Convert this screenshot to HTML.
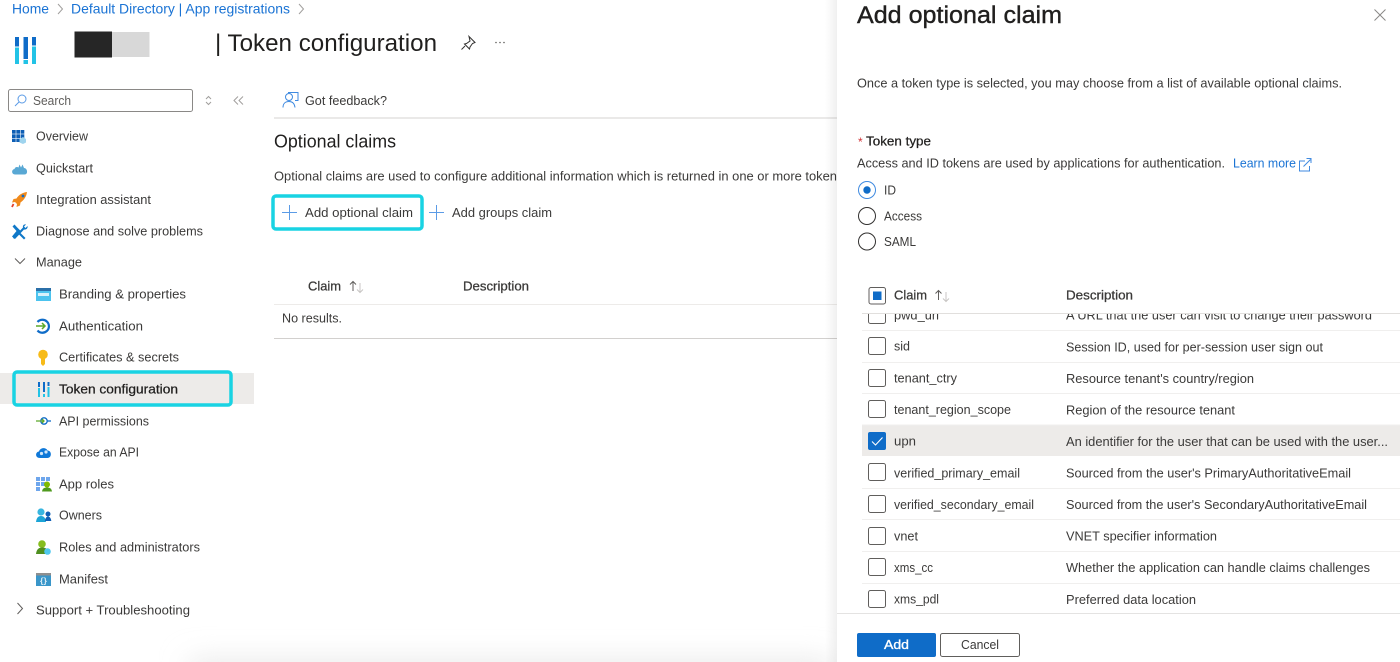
<!DOCTYPE html>
<html lang="en"><head><meta charset="utf-8"><title>Token configuration</title>
<style>
html,body{margin:0;padding:0;background:#fff;width:1400px;height:662px;overflow:hidden}
svg{display:block;filter:blur(.35px)}
text{font-family:"Liberation Sans",sans-serif;font-size:13px;fill:#3b3a39}
.l{fill:#1a73d4}
.s{stroke:#323130;stroke-width:.25}
.d{stroke:#201f1e;stroke-width:.25;fill:#201f1e}
.cb{fill:#fff;stroke:#605e5c;stroke-width:1}
.sep{stroke:#f0efee;stroke-width:1}
</style></head><body>
<svg xmlns="http://www.w3.org/2000/svg" width="1400" height="662" viewBox="0 0 1400 662">
<defs>
<linearGradient id="sh" x1="0" x2="1"><stop offset="0" stop-color="#000" stop-opacity="0"/><stop offset="1" stop-color="#000" stop-opacity=".06"/></linearGradient>
<filter id="bl" x="-20%" y="-200%" width="140%" height="500%"><feGaussianBlur stdDeviation="14"/></filter>
<clipPath id="rows"><rect x="857" y="314" width="543" height="299"/></clipPath>
</defs>
<rect width="1400" height="662" fill="#fff"/>
<rect x="190" y="660" width="640" height="30" fill="#e9e9e9" filter="url(#bl)"/>

<!-- breadcrumb -->
<text x="12" y="13.500" class="l" style="font-size:14px" textLength="37" lengthAdjust="spacingAndGlyphs">Home</text>
<path d="M58 4l4.500 5-4.500 5" fill="none" stroke="#a19f9d"/>
<text x="71" y="13.500" class="l" style="font-size:14px" textLength="219" lengthAdjust="spacingAndGlyphs">Default Directory | App registrations</text>
<path d="M299 4l4.500 5-4.500 5" fill="none" stroke="#a19f9d"/>

<!-- logo -->
<g>
<rect x="15" y="37" width="4" height="9.500" fill="#0f6cc8"/><rect x="15" y="47.500" width="4" height="16.500" fill="#22c3e6"/>
<rect x="23.500" y="37" width="4.500" height="22" fill="#0f6cc8"/><rect x="23.500" y="60" width="4.500" height="4" fill="#22c3e6"/>
<rect x="32" y="37" width="4" height="8.500" fill="#0f6cc8"/><rect x="32" y="46.500" width="4" height="17.500" fill="#22c3e6"/>
</g>
<rect x="74.500" y="31.500" width="37.500" height="26" fill="#262626"/><rect x="112" y="32" width="37.500" height="25" fill="#d8d8d8"/>

<text x="215" y="51" style="font-size:24px;fill:#201f1e" textLength="222" lengthAdjust="spacingAndGlyphs">| Token configuration</text>
<g fill="none" stroke="#323130" stroke-width="1"><path d="M469 36.500l6 6-2.500 1-2.500 3.500-.5 2-5-5 2-.5 3.500-2.500z"/><path d="M465 46l-3.500 3.500"/></g>
<g fill="#605e5c"><circle cx="496" cy="42.500" r=".8"/><circle cx="500" cy="42.500" r=".8"/><circle cx="504" cy="42.500" r=".8"/></g>

<!-- search -->
<rect x="8.500" y="89.500" width="184" height="22" rx="2" fill="#fff" stroke="#8a8886"/>
<circle cx="22" cy="99" r="4" fill="none" stroke="#5b9be6"/><path d="M19 102l-4 4" stroke="#5b9be6"/>
<text x="33" y="105" style="fill:#605e5c" textLength="38" lengthAdjust="spacingAndGlyphs">Search</text>
<path d="M206 99l2.500-2.500 2.500 2.500M206 102l2.500 2.500 2.500-2.500" fill="none" stroke="#a19f9d"/>
<path d="M238 96.500l-4 4 4 4M243 96.500l-4 4 4 4" fill="none" stroke="#a19f9d"/>

<!-- selected nav -->
<rect x="0" y="373" width="254" height="31" fill="#edebe9"/>

<!-- nav icons -->
<g fill="#0f5fb5"><rect x="12" y="130" width="3.700" height="3.700"/><rect x="16.300" y="130" width="3.700" height="3.700"/><rect x="20.600" y="130" width="3.700" height="3.700"/><rect x="12" y="134.300" width="3.700" height="3.700"/><rect x="16.300" y="134.300" width="3.700" height="3.700"/><rect x="20.600" y="134.300" width="3.700" height="3.700"/><rect x="12" y="138.600" width="3.700" height="3.400"/><rect x="16.300" y="138.600" width="3.700" height="3.400"/></g>
<path d="M19.500 139l3.500-2 3 2v3.500l-3 1.500-3.500-1.500z" fill="#9fd4ee"/>
<path d="M15 174.500c-3.500 0-4-5-.5-5.500.5-2 2.500-2.500 4-1.500l1-3 1.500 3 1.500-3 1.500 3.500c3.500 0 4.500 6.500 .5 6.500z" fill="#59a8d4"/>
<path d="M27 192c-4.500.5-8.500 3-10.500 6.500l-3 .5-1.500 3.500 3-.5 2 2-.5 3 3.500-1.500.5-3c3.500-2.500 6-6 6.500-10.500z" fill="#f08a1c"/><circle cx="23" cy="196" r="1.400" fill="#0f6cc8"/><path d="M13.500 204l-1.500 3" stroke="#e3402a" stroke-width="1.800"/>
<path d="M14.500 224.500l-2 2 4 4.500-4.500 5.500 2.200 2 5.500-5 1.800-1.700-4.500-4.500z" fill="#0f78c8"/>
<path d="M13 238l10-10.500c-.5-2 1-3.700 3-3l-2 2 1.500 1.500 2-2c.6 2.300-1.300 4-3.500 3.500l-9 9.500z" fill="#0f78c8"/><path d="M20 232.500l5.500 5.500-1.500 1.500-5.500-5.500z" fill="#0f78c8"/>
<path d="M15 258.500l5 5 5-5" fill="none" stroke="#605e5c"/>
<path d="M17.500 603l5 5.500-5 5.500" fill="none" stroke="#605e5c"/>
<!-- branding -->
<rect x="36" y="288" width="15" height="13" fill="#4cc3ee"/><rect x="36" y="288" width="15" height="3" fill="#2b6fa8"/><rect x="38" y="293" width="11" height="3" fill="#d7f1fb"/>
<!-- authentication -->
<path d="M37.500 322a6.500 6.500 0 1 1 0 8.500" fill="none" stroke="#0f6cc8" stroke-width="2.200"/><path d="M36 326h9M42 323l3 3-3 3" fill="none" stroke="#5ba829" stroke-width="1.500"/>
<!-- key -->
<circle cx="43" cy="354.500" r="4.800" fill="#f7bb19"/><path d="M41 358h4v6l-2 2-2-2z" fill="#f7bb19"/>
<!-- token config -->
<g><rect x="38" y="382" width="2" height="5" fill="#0f6cc8"/><rect x="38" y="388" width="2" height="9" fill="#22c3e6"/><rect x="43" y="382" width="2" height="10" fill="#0f6cc8"/><rect x="43" y="394" width="2" height="3" fill="#22c3e6"/><rect x="47.500" y="382" width="2" height="4" fill="#0f6cc8"/><rect x="47.500" y="387" width="2" height="10" fill="#22c3e6"/></g>
<!-- api perm -->
<circle cx="44" cy="421" r="3.200" fill="none" stroke="#0f6cc8" stroke-width="1.300"/><path d="M47 421h4" stroke="#0f6cc8" stroke-width="1.300"/><path d="M36 421h8M42 419l2 2-2 2" fill="none" stroke="#5ba829" stroke-width="1.300"/>
<!-- expose -->
<path d="M40 458c-5 0-5-6-1-6.500 1-4 7-4.500 8.500-1 4.500 0 4.500 7.500 0 7.500z" fill="#0f78d8"/><circle cx="41.500" cy="453.500" r="1.600" fill="#cfe6fa"/><circle cx="46" cy="452" r="1.600" fill="#cfe6fa"/>
<!-- app roles -->
<g fill="#6ea6ec"><rect x="36" y="477" width="4" height="4"/><rect x="41" y="477" width="4" height="4"/><rect x="46" y="477" width="4" height="4"/><rect x="36" y="482" width="4" height="4"/><rect x="41" y="482" width="4" height="4"/><rect x="36" y="487" width="4" height="4"/></g>
<circle cx="47" cy="484.500" r="3" fill="#7fba00"/><path d="M42 491.500c.5-3 2-4 5-4s4.500 1 5 4z" fill="#4f9a1e"/>
<!-- owners -->
<circle cx="41" cy="512" r="3.600" fill="#38b6e0"/><path d="M36 522c.5-4 2-6 5-6s4.500 2 5 6z" fill="#1ca4d6"/><circle cx="48" cy="514" r="2.500" fill="#0f5fb5"/><path d="M45 521c.3-3 1.500-4.500 3-4.500s3 1.500 3.300 4.500z" fill="#0f5fb5"/>
<!-- roles -->
<circle cx="42" cy="544" r="3.800" fill="#85bd1f"/><path d="M36 554c.5-4.500 2.500-6.500 6-6.500s4 1 5 2v4.500z" fill="#4f8f20"/><circle cx="47.500" cy="551.500" r="3.300" fill="#50c8ee"/>
<!-- manifest -->
<rect x="36" y="573" width="15" height="13" fill="#3a96c9"/><rect x="36" y="573" width="15" height="2.500" fill="#8f8f8f"/><text x="40" y="583.500" style="font-size:8px;fill:#fff" textLength="7" lengthAdjust="spacingAndGlyphs">{}</text>

<!-- nav labels -->
<g>
<text x="36" y="140.500" textLength="52" lengthAdjust="spacingAndGlyphs">Overview</text>
<text x="36" y="172.500" textLength="57" lengthAdjust="spacingAndGlyphs">Quickstart</text>
<text x="36" y="204" textLength="115" lengthAdjust="spacingAndGlyphs">Integration assistant</text>
<text x="36" y="235.500" textLength="167" lengthAdjust="spacingAndGlyphs">Diagnose and solve problems</text>
<text x="36" y="266.500" textLength="46" lengthAdjust="spacingAndGlyphs">Manage</text>
<text x="59" y="298.500" textLength="127" lengthAdjust="spacingAndGlyphs">Branding &amp; properties</text>
<text x="59" y="330.500" textLength="84" lengthAdjust="spacingAndGlyphs">Authentication</text>
<text x="59" y="361.500" textLength="120" lengthAdjust="spacingAndGlyphs">Certificates &amp; secrets</text>
<text x="59" y="393.500" class="d" textLength="119" lengthAdjust="spacingAndGlyphs">Token configuration</text>
<text x="59" y="425.500" textLength="90" lengthAdjust="spacingAndGlyphs">API permissions</text>
<text x="59" y="456.500" textLength="80" lengthAdjust="spacingAndGlyphs">Expose an API</text>
<text x="59" y="488.500" textLength="55" lengthAdjust="spacingAndGlyphs">App roles</text>
<text x="59" y="519.500" textLength="43" lengthAdjust="spacingAndGlyphs">Owners</text>
<text x="59" y="551.500" textLength="141" lengthAdjust="spacingAndGlyphs">Roles and administrators</text>
<text x="59" y="583.500" textLength="49" lengthAdjust="spacingAndGlyphs">Manifest</text>
<text x="36" y="614.500" textLength="154" lengthAdjust="spacingAndGlyphs">Support + Troubleshooting</text>
</g>
<rect x="14" y="372" width="217" height="33" rx="3" fill="none" stroke="#19d3e3" stroke-width="3.500"/>

<!-- main -->
<g fill="none" stroke="#3f8ae0" stroke-width="1"><circle cx="289" cy="97" r="3.500"/><path d="M283 107.500c0-4 2.500-6 6-6s5.500 2 6 6"/><path d="M288 92.500h10v8h-3"/></g>
<text x="305" y="105" textLength="82" lengthAdjust="spacingAndGlyphs">Got feedback?</text>
<path d="M274 118h563" stroke="#e3e2e1" stroke-width="1.500"/>
<text x="274" y="147.500" style="font-size:18px;fill:#201f1e" textLength="122" lengthAdjust="spacingAndGlyphs">Optional claims</text>
<text x="274" y="180.500" textLength="563" lengthAdjust="spacingAndGlyphs">Optional claims are used to configure additional information which is returned in one or more token</text>
<path d="M289.500 205v15M282 212.500h15" stroke="#5b9be6"/>
<text x="305" y="217" textLength="108" lengthAdjust="spacingAndGlyphs">Add optional claim</text>
<path d="M436.500 205v15M429 212.500h15" stroke="#5b9be6"/>
<text x="452" y="217" textLength="100" lengthAdjust="spacingAndGlyphs">Add groups claim</text>
<rect x="273" y="196" width="149" height="33" rx="3" fill="none" stroke="#19d3e3" stroke-width="3.500"/>
<text x="308" y="290.500" class="s" textLength="33" lengthAdjust="spacingAndGlyphs">Claim</text>
<path d="M353 291v-9M350 284.500l3-3 3 3" fill="none" stroke="#605e5c"/><path d="M360 283v9M357 289.500l3 3 3-3" fill="none" stroke="#c8c6c4"/>
<text x="463" y="290.500" class="s" textLength="66" lengthAdjust="spacingAndGlyphs">Description</text>
<path d="M274 304.500h563" stroke="#edebe9"/>
<text x="282" y="322.500" textLength="60" lengthAdjust="spacingAndGlyphs">No results.</text>
<path d="M274 338.500h563" stroke="#d2d0ce"/>

<!-- panel -->
<rect x="825" y="0" width="12" height="662" fill="url(#sh)"/>
<rect x="837" y="0" width="563" height="662" fill="#fff"/>
<text x="857" y="23" style="font-size:24px;fill:#201f1e;stroke:#201f1e;stroke-width:.4" textLength="205" lengthAdjust="spacingAndGlyphs">Add optional claim</text>
<path d="M1374.500 9.500l11 11M1385.500 9.500l-11 11" stroke="#8a8886"/>
<text x="857" y="87.500" textLength="485" lengthAdjust="spacingAndGlyphs">Once a token type is selected, you may choose from a list of available optional claims.</text>
<text x="858" y="146" style="fill:#d13438;font-size:12px">*</text>
<text x="866" y="145.500" class="d" textLength="65" lengthAdjust="spacingAndGlyphs">Token type</text>
<text x="857" y="167.500" textLength="368" lengthAdjust="spacingAndGlyphs">Access and ID tokens are used by applications for authentication.</text>
<text x="1233" y="167.500" class="l" textLength="63" lengthAdjust="spacingAndGlyphs">Learn more</text>
<path d="M1305 161h-5.500v10h10v-5M1303.500 166.500l7-7M1306.500 158.500h4.500v4.500" fill="none" stroke="#3f8ae0"/>

<circle cx="867" cy="190" r="8.500" fill="#fff" stroke="#3f8ae0"/><circle cx="867" cy="190" r="3.700" fill="#0f6cc8"/>
<circle cx="867" cy="216" r="8.500" fill="#fff" stroke="#323130"/>
<circle cx="867" cy="241.500" r="8.500" fill="#fff" stroke="#323130"/>
<text x="884" y="194.500" textLength="12" lengthAdjust="spacingAndGlyphs">ID</text>
<text x="884" y="220.500" textLength="38" lengthAdjust="spacingAndGlyphs">Access</text>
<text x="884" y="246" textLength="32" lengthAdjust="spacingAndGlyphs">SAML</text>

<!-- header -->
<rect x="869" y="287.500" width="16.500" height="16.500" rx="2" fill="#fff" stroke="#605e5c"/><rect x="873" y="291.500" width="8.500" height="8.500" fill="#0f6cc8"/>
<text x="894" y="299.500" class="s" textLength="33" lengthAdjust="spacingAndGlyphs">Claim</text>
<path d="M938.500 300v-9M935.500 293.500l3-3 3 3" fill="none" stroke="#605e5c"/><path d="M946 292v9M943 298.500l3 3 3-3" fill="none" stroke="#c8c6c4"/>
<text x="1066" y="299.500" class="s" textLength="67" lengthAdjust="spacingAndGlyphs">Description</text>

<!-- rows -->
<g clip-path="url(#rows)">
<rect x="862" y="425" width="538" height="31" fill="#edebe9"/>
<path class="sep" d="M862 330.500h538M862 362.500h538M862 393.500h538M862 425h538M862 488.500h538M862 519.500h538M862 551.500h538M862 583.500h538"/>
<rect class="cb" x="868.500" y="306.500" width="17" height="17" rx="2"/>
<rect class="cb" x="868.500" y="337.500" width="17" height="17" rx="2"/>
<rect class="cb" x="868.500" y="369.500" width="17" height="17" rx="2"/>
<rect class="cb" x="868.500" y="400.500" width="17" height="17" rx="2"/>
<rect x="868" y="432" width="18" height="18" rx="2" fill="#0f6cc8"/><path d="M872 441.500l3.500 3.500 7-7.500" fill="none" stroke="#fff" stroke-width="1.100"/>
<rect class="cb" x="868.500" y="463.500" width="17" height="17" rx="2"/>
<rect class="cb" x="868.500" y="495.500" width="17" height="17" rx="2"/>
<rect class="cb" x="868.500" y="527.500" width="17" height="17" rx="2"/>
<rect class="cb" x="868.500" y="558.500" width="17" height="17" rx="2"/>
<rect class="cb" x="868.500" y="590.500" width="17" height="17" rx="2"/>

<text x="894" y="319.500" textLength="45" lengthAdjust="spacingAndGlyphs">pwd_uri</text>
<text x="1066" y="319.500" textLength="306" lengthAdjust="spacingAndGlyphs">A URL that the user can visit to change their password</text>
<text x="894" y="350.500" textLength="16" lengthAdjust="spacingAndGlyphs">sid</text>
<text x="1066" y="351.500" textLength="257" lengthAdjust="spacingAndGlyphs">Session ID, used for per-session user sign out</text>
<text x="894" y="382.500" textLength="63" lengthAdjust="spacingAndGlyphs">tenant_ctry</text>
<text x="1066" y="383" textLength="188" lengthAdjust="spacingAndGlyphs">Resource tenant's country/region</text>
<text x="894" y="414" textLength="117" lengthAdjust="spacingAndGlyphs">tenant_region_scope</text>
<text x="1066" y="414.500" textLength="169" lengthAdjust="spacingAndGlyphs">Region of the resource tenant</text>
<text x="894" y="445.500" textLength="22" lengthAdjust="spacingAndGlyphs">upn</text>
<text x="1066" y="446" textLength="322" lengthAdjust="spacingAndGlyphs">An identifier for the user that can be used with the user...</text>
<text x="894" y="477.500" textLength="126" lengthAdjust="spacingAndGlyphs">verified_primary_email</text>
<text x="1066" y="477.500" textLength="285" lengthAdjust="spacingAndGlyphs">Sourced from the user's PrimaryAuthoritativeEmail</text>
<text x="894" y="509" textLength="140" lengthAdjust="spacingAndGlyphs">verified_secondary_email</text>
<text x="1066" y="509" textLength="301" lengthAdjust="spacingAndGlyphs">Sourced from the user's SecondaryAuthoritativeEmail</text>
<text x="894" y="540.500" textLength="24" lengthAdjust="spacingAndGlyphs">vnet</text>
<text x="1066" y="540.500" textLength="151" lengthAdjust="spacingAndGlyphs">VNET specifier information</text>
<text x="894" y="572" textLength="39" lengthAdjust="spacingAndGlyphs">xms_cc</text>
<text x="1066" y="572" textLength="304" lengthAdjust="spacingAndGlyphs">Whether the application can handle claims challenges</text>
<text x="894" y="603.500" textLength="45" lengthAdjust="spacingAndGlyphs">xms_pdl</text>
<text x="1066" y="604" textLength="130" lengthAdjust="spacingAndGlyphs">Preferred data location</text>
</g>
<path d="M862 313.500h538" stroke="#e1dfdd"/>
<path d="M837 613.500h563" stroke="#e4e3e2"/>

<!-- footer -->
<rect x="857" y="633" width="79" height="24" rx="2" fill="#0f6cc8"/>
<text x="884" y="649" style="fill:#fff;stroke:#fff;stroke-width:.35" textLength="25" lengthAdjust="spacingAndGlyphs">Add</text>
<rect x="940.500" y="633.500" width="79" height="23" rx="2" fill="#fff" stroke="#605e5c"/>
<text x="961" y="649" textLength="38" lengthAdjust="spacingAndGlyphs">Cancel</text>
</svg>
</body></html>
